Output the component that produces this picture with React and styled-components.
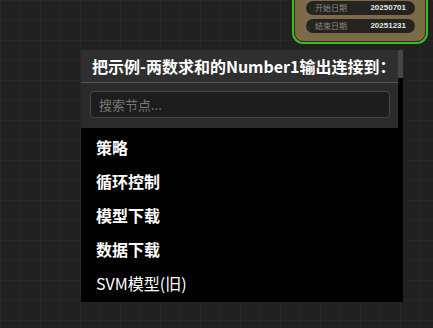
import React from "react"
import styled, { createGlobalStyle } from "styled-components"

const GlobalStyle = createGlobalStyle`
  html, body {
    margin: 0;
    padding: 0;
    background: #222222;
    font-family: "Noto Sans CJK SC", "Noto Sans", sans-serif;
  }
`

const Canvas = styled.div`
  position: relative;
  width: 433px;
  height: 328px;
  overflow: hidden;
  background-color: #212121;
  background-image:
    linear-gradient(#272727 1px, transparent 1px),
    linear-gradient(90deg, #272727 1px, transparent 1px);
  background-size: 20px 20px;
`

const Node = styled.div`
  position: absolute;
  left: 294px;
  top: -40px;
  width: 132px;
  height: 82px;
  box-sizing: border-box;
  padding: 0 10px 8px 11px;
  background: #7b6b47;
  border: 1px solid #2a2620;
  border-radius: 9px;
  box-shadow: 0 0 0 2px #3fbd1c;
  display: flex;
  flex-direction: column;
  justify-content: flex-end;
  gap: 4px;
`

const Pill = styled.div`
  height: 14px;
  border-radius: 7px;
  background: #262420;
  display: flex;
  align-items: center;
  justify-content: space-between;
  padding: 0 9px 0 9px;
  font-size: 8px;
  line-height: 1;
`

const PillLabel = styled.span`
  color: #8f8a80;
`

const PillValue = styled.span`
  color: #e6e6e6;
  font-weight: bold;
  font-family: "Liberation Sans", "Noto Sans", sans-serif;
`

const Menu = styled.div`
  position: absolute;
  left: 81px;
  top: 50px;
  width: 322px;
  height: 252px;
  background: #000;
  overflow: hidden;
  display: flex;
`

const Content = styled.div`
  flex: 1;
  min-width: 0;
  display: flex;
  flex-direction: column;
`

const ScrollTrack = styled.div`
  width: 5px;
  flex: none;
  background: #000;
`

const ScrollThumb = styled.div`
  height: 28px;
  background: #464646;
`

const Header = styled.div`
  height: 34px;
  box-sizing: border-box;
  padding: 0 11px;
  display: flex;
  align-items: center;
  background: #2f2f2f;
  border-bottom: 1px solid #555;
  color: #fff;
  font-size: 16px;
  font-weight: bold;
  white-space: nowrap;
`

const SearchBox = styled.div`
  background: #2b2b2b;
  padding: 8px 8px 10px 9px;
`

const SearchInput = styled.input`
  display: block;
  width: 100%;
  height: 27px;
  box-sizing: border-box;
  background: #1d1d1d;
  border: 1px solid #464646;
  border-radius: 4px;
  padding: 0 8px;
  color: #ddd;
  font-family: "Noto Sans CJK SC", "Noto Sans", sans-serif;
  font-size: 13px;
  outline: none;

  &::placeholder {
    color: #777;
  }
`

const List = styled.div`
  padding: 2px 0;
`

const Item = styled.div`
  height: 34px;
  display: flex;
  align-items: center;
  padding-left: 15px;
  color: #fff;
  font-size: 16px;
  font-weight: ${p => (p.$strong ? "bold" : "normal")};
`

const items = ["策略", "循环控制", "模型下载", "数据下载", "SVM模型(旧)"]

function App() {
  return (
    <>
      <GlobalStyle />
      <Canvas>
        <Node>
          <Pill>
            <PillLabel>开始日期</PillLabel>
            <PillValue>20250701</PillValue>
          </Pill>
          <Pill>
            <PillLabel>结束日期</PillLabel>
            <PillValue>20251231</PillValue>
          </Pill>
        </Node>
        <Menu>
          <Content>
            <Header>把示例-两数求和的Number1输出连接到：</Header>
            <SearchBox>
              <SearchInput placeholder="搜索节点..." />
            </SearchBox>
            <List>
              {items.map(name => (
                <Item key={name} $strong={!/^[A-Z]/.test(name)}>{name}</Item>
              ))}
            </List>
          </Content>
          <ScrollTrack>
            <ScrollThumb />
          </ScrollTrack>
        </Menu>
      </Canvas>
    </>
  )
}

export default App
